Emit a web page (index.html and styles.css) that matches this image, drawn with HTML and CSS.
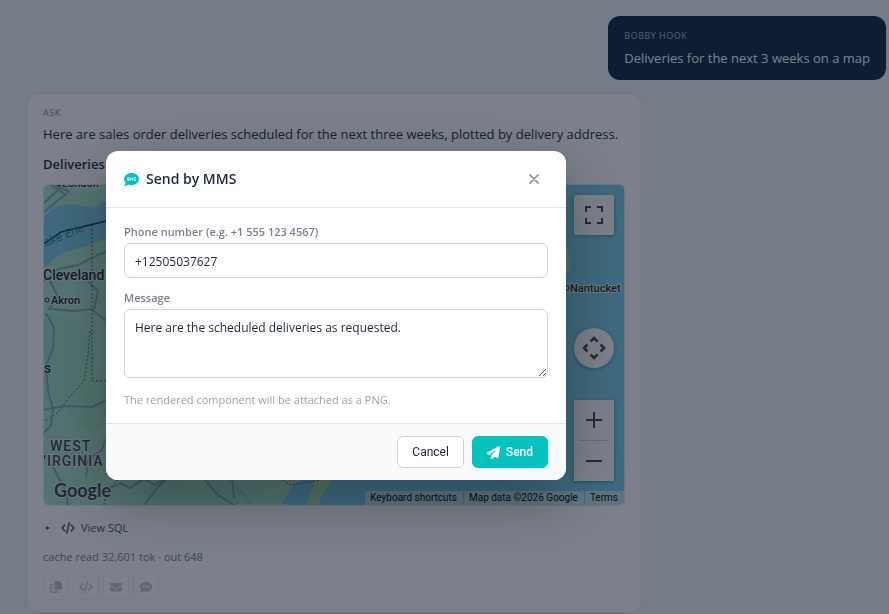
FILE: index.html
```html
<!DOCTYPE html>
<html lang="en">
<head>
    <meta charset="UTF-8" />
    <title>Ask - Deliveries</title>
    <link rel="stylesheet" href="styles.css">
</head>
<body>
    <!-- Icons shared by the page and the dialog -->
    <svg class="sprite" aria-hidden="true">
        <symbol id="icon-sms" viewBox="0 0 512 512">
            <path fill="currentColor" d="M256 32C114.600 32 0 125.100 0 240c0 49.600 21.400 95 57 130.700C44.500 421.100 2.700 466 2.200 466.500c-2.200 2.300-2.800 5.700-1.500 8.700S4.800 480 8 480c66.300 0 116-31.800 140.600-51.400 32.700 12.300 69 19.400 107.400 19.400 141.400 0 256-93.100 256-208S397.400 32 256 32z"/>
            <path fill="none" stroke="var(--knockout)" stroke-width="34" d="M170 194h-38q-18 0-18 20 0 16 18 22l20 8q18 6 18 22 0 20-18 20h-40M208 300V200l46 58 46-58v100M402 194h-38q-18 0-18 20 0 16 18 22l20 8q18 6 18 22 0 20-18 20h-40"/>
        </symbol>
        <symbol id="icon-code" viewBox="0 0 16 14">
            <path fill="none" stroke="currentColor" stroke-width="1.700" stroke-linecap="round" stroke-linejoin="round" d="M4.300 3.500 1 7l3.300 3.500M11.700 3.500 15 7l-3.300 3.500M9.500 1 6.500 13"/>
        </symbol>
    </svg>

    <main class="chat">
        <section class="bubble bubble-user">
            <div class="who">Bobby Hook</div>
            <p>Deliveries for the next 3 weeks on a map</p>
        </section>

        <section class="bubble bubble-ask">
            <div class="who">Ask</div>
            <p>Here are sales order deliveries scheduled for the next three weeks, plotted by delivery address.</p>
            <h3>Deliveries – next three weeks</h3>

            <div class="map">
                <svg class="map-canvas" viewBox="0 0 580 320" preserveAspectRatio="xMaxYMid slice" role="img" aria-label="Delivery map">
                    <rect width="580" height="320" fill="#aae5ca"/>
                    <g fill="#92d9b3" opacity=".35">
                        <path d="M0 134Q14 122 22 134T40 150T50 176T62 190V240Q40 250 30 236T0 216z"/>
                        <path d="M122 290Q150 304 172 296T214 320H104Q96 304 122 290zM200 294l24 6-12 16-16-8z"/>
                        <path d="M8 176 24 158 40 174 30 180z"/>
                    </g>
                    <!-- water -->
                    <path fill="#7bcde4" d="M0 32 10 22 28 19 50 23 62 16 80 4V48L62 54 40 62 18 68 0 82z"/>
                    <path fill="#7bcde4" d="M240 290 238 320H580V0H330z"/>
                    <path fill="#aae5ca" d="M236 290H262L246 304 238 320H230z"/>
                    <path fill="#b5e3ae" d="M272 290H292L280 306 274 320H262L270 302zM512 48l8 8 6 16-1 14h-9l-4-14z"/>
                    <path fill="none" stroke="#7bcde4" stroke-width="2" d="M178 290 190 300 202 312 206 320"/>
                    <!-- roads -->
                    <g fill="none" stroke="#82a9b9" stroke-width="2">
                        <path d="M0 27 23 8M0 18 17 2M7 0 22 10M11 0 26 7"/>
                        <path d="M0 96 14 84 34 80 54 70 68 65M4 92 14 112 5 124 30 126 47 124 68 140M42 94 54 106 50 124"/>
                        <path d="M2 128 10 142 9 164 2 180 4 206 9 224 7 240 0 248M0 225 20 221 48 222 66 214"/>
                        <path d="M64 250 57 266 44 274 42 292M0 268 10 284 22 306 24 320M62 306 76 298 86 303 100 294 111 300 128 290 160 294 174 310 190 320M100 320 114 302 124 292M188 290 190 314"/>
                    </g>
                    <!-- borders -->
                    <path fill="none" stroke="#203040" stroke-width="1.500" d="M0 59 17 47 62 36"/>
                    <path fill="none" stroke="#44645f" stroke-width="1" stroke-dasharray="2 2" d="M48 40V196H64M46 146 44 170 40 196 24 214 14 228 0 236M60 320 62 308 76 292M232 290 246 300 272 296 292 290"/>

                    <text class="lake" transform="translate(-4 64) rotate(-22)">Lake Erie</text>
                    <g class="place">
                        <text x="18" y="2" class="town">London</text>
                        <text x="-1" y="95" class="city">Cleveland</text>
                        <text x="7" y="119" class="town">Akron</text>
                        <text x="0" y="188" class="city">s</text>
                        <text x="192" y="328" class="town">Richmond</text>
                        <text x="526" y="107" class="town">Nantucket</text>
                    </g>
                    <g fill="#d8f0e4" stroke="#20242c">
                        <circle cx="15" cy="-1" r="2"/>
                        <circle cx="3" cy="115" r="2"/>
                        <circle cx="523" cy="103" r="2"/>
                    </g>
                    <g class="state">
                        <text x="6" y="266">WEST</text>
                        <text x="-7" y="281">VIRGINIA</text>
                    </g>
                    <text class="google" x="10" y="312">Google</text>
                </svg>

                <div class="map-controls">
                    <button class="map-btn" aria-label="Toggle fullscreen">
                        <svg width="20" height="20" viewBox="0 0 20 20"><path fill="none" stroke="#444" stroke-width="2" d="M2 7V2h5M13 2h5v5M18 13v5h-5M7 18H2v-5"/></svg>
                    </button>
                    <button class="map-btn map-pan" aria-label="Map camera controls">
                        <svg width="24" height="24" viewBox="0 0 24 24"><path fill="none" stroke="#444" stroke-width="2.500" d="M8.500 5.500l3.500-3.500 3.500 3.500M8.500 18.500l3.500 3.500 3.500-3.500M5.500 8.500l-3.500 3.500 3.500 3.500M18.500 8.500l3.500 3.500-3.500 3.500"/></svg>
                    </button>
                    <div class="map-zoom">
                        <button class="map-btn" aria-label="Zoom in">
                            <svg width="18" height="18" viewBox="0 0 18 18"><path stroke="#444" stroke-width="2" d="M1 9h16M9 1v16"/></svg>
                        </button>
                        <button class="map-btn" aria-label="Zoom out">
                            <svg width="18" height="18" viewBox="0 0 18 18"><path stroke="#444" stroke-width="2" d="M1 9h16"/></svg>
                        </button>
                    </div>
                </div>

                <div class="map-legal">
                    <button>Keyboard shortcuts</button>
                    <span>Map data ©2026 Google</span>
                    <a href="#">Terms</a>
                </div>
            </div>

            <details class="sql">
                <summary>
                    <svg class="marker" width="4" height="6" viewBox="0 0 4 6"><path fill="currentColor" d="M0 1l4 2-4 2z"/></svg>
                    <svg width="14" height="12"><use href="#icon-code"/></svg>
                    View SQL
                </summary>
            </details>

            <div class="usage">cache read 32,601 tok · out 648</div>

            <div class="actions">
                <button aria-label="Copy">
                    <svg width="12" height="12" viewBox="0 0 12 12"><path fill="currentColor" d="M5.500 0H9l3 3v4.500q0 1-1 1H5.500q-1 0-1-1V1q0-1 1-1z"/><path fill="none" stroke="currentColor" stroke-width="1.300" d="M3.200 3.600H1.500q-.8 0-.8.8v6.100q0 .8.8.8h5q.8 0 .8-.8V9.800"/></svg>
                </button>
                <button aria-label="Copy SQL"><svg width="14" height="12"><use href="#icon-code"/></svg></button>
                <button aria-label="Send by email">
                    <svg width="12" height="12" viewBox="0 0 12 12"><path fill="currentColor" d="M1.200 2h9.600Q12 2 12 3 12 3.500 11.500 3.900L6.600 7.400q-.6.400-1.200 0L.5 3.900Q0 3.500 0 3q0-1 1.200-1zM0 4.700l5 3.600q1 .6 2 0l5-3.600V9q0 1.400-1.400 1.400H1.400Q0 10.400 0 9z"/></svg>
                </button>
                <button aria-label="Send by MMS"><svg width="12" height="12"><use href="#icon-sms"/></svg></button>
            </div>
        </section>
    </main>

    <div class="overlay">
        <form class="modal" role="dialog" aria-labelledby="mms-title">
            <div class="modal-header">
                <svg width="15" height="15"><use href="#icon-sms"/></svg>
                <h2 id="mms-title">Send by MMS</h2>
                <button type="button" class="close" aria-label="Close">
                    <svg width="10" height="10" viewBox="0 0 10 10"><path stroke="currentColor" stroke-width="2" stroke-linecap="round" d="M1 1l8 8M9 1L1 9"/></svg>
                </button>
            </div>
            <div class="modal-body">
                <label for="phone">Phone number (e.g. +1 555 123 4567)</label>
                <input type="tel" id="phone" value="+12505037627">
                <label for="message">Message</label>
                <textarea id="message">Here are the scheduled deliveries as requested.</textarea>
                <p class="hint">The rendered component will be attached as a PNG.</p>
            </div>
            <div class="modal-footer">
                <button type="button" class="btn">Cancel</button>
                <button type="button" class="btn btn-primary">
                    <svg width="13" height="13" viewBox="0 0 512 512"><path fill="currentColor" d="M498.100 5.600c10.100 7 15.400 19.100 13.500 31.200l-64 416c-1.500 9.700-7.400 18.200-16 23s-18.900 5.400-28 1.600L284 427.700l-68.500 74.100c-8.900 9.700-22.900 12.900-35.200 8.100S160 493.200 160 480v-83.600c0-4 1.500-7.800 4.200-10.800L331.800 202.800c5.800-6.300 5.600-16-.4-22s-15.700-6.400-22-.7L106 360.800 17.700 316.600C7.100 311.300.3 300.700 0 288.900s5.900-22.800 16.100-28.700l448-256c10.700-6.100 23.900-5.500 34 1.400z"/></svg>
                    Send
                </button>
            </div>
        </form>
    </div>
</body>
</html>
```
FILE: styles.css
```css
* {
    box-sizing: border-box;
}
body {
    font-family: "Open Sans", "Noto Sans", sans-serif;
    background-color: #f4f6f9;
    color: #1f2937;
    margin: 0;
    min-height: 100vh;
}
button, input, textarea {
    font-family: inherit;
    margin: 0;
}
h2, h3, p {
    margin: 0;
}
.sprite {
    display: none;
}

/* Chat */
.chat {
    display: flex;
    flex-direction: column;
    gap: 13px;
    padding: 16px 3px 2px 26px;
}
.bubble {
    border-radius: 12px;
    padding: 12px 16px;
    font-size: 13px;
    line-height: 20px;
}
.who {
    font-size: 9px;
    line-height: 14px;
    letter-spacing: 0.5px;
    text-transform: uppercase;
}
.bubble-user {
    align-self: flex-end;
    padding: 13px 16px 12px;
    background-color: #0a2540;
    color: #fff;
}
.bubble-user p {
    margin-top: 5px;
}
.bubble-user .who {
    color: #b0b8c4;
}
.bubble-ask {
    width: 100%;
    max-width: 616px;
    background-color: #fff;
    border: 1px solid #e2e6ee;
}
.bubble-ask .who {
    color: #848b98;
}
.bubble-ask p {
    margin-top: 4px;
    white-space: nowrap;
}
.bubble-ask h3 {
    margin-top: 10px;
    font-size: 13px;
    font-weight: 600;
}

/* Map */
.map {
    position: relative;
    height: 322px;
    margin-top: 10px;
    border: 1px solid #e2e6ee;
    border-radius: 6px;
    overflow: hidden;
    font-family: Roboto, sans-serif;
}
.map-canvas {
    display: block;
    width: 100%;
    height: 100%;
}
.map-canvas text {
    paint-order: stroke;
    stroke: #d8f0e4;
    stroke-width: 2px;
    fill: #20242c;
}
.map-canvas .town {
    font-size: 11px;
    font-weight: 500;
}
.map-canvas .city {
    font-size: 14px;
    font-weight: 500;
}
.map-canvas .state text {
    font-size: 14px;
    font-weight: 500;
    letter-spacing: 1px;
    fill: #3c4450;
}
.map-canvas .lake {
    font-size: 12px;
    fill: #2f8fa8;
    stroke: none;
}
.map-canvas .google {
    font-family: Lato, sans-serif;
    font-size: 18px;
    font-weight: 700;
    fill: #3c4048;
}
.map-controls {
    position: absolute;
    top: 10px;
    right: 10px;
}
.map-btn {
    display: flex;
    align-items: center;
    justify-content: center;
    width: 40px;
    height: 40px;
    padding: 0;
    background-color: #fff;
    border: none;
    border-radius: 2px;
    box-shadow: 0 1px 4px rgba(0,0,0,0.3);
}
.map-pan {
    margin: 93px 0 32px;
    border-radius: 50%;
}
.map-zoom {
    background-color: #fff;
    box-shadow: 0 1px 4px rgba(0,0,0,0.3);
}
.map-zoom .map-btn {
    box-shadow: none;
}
.map-zoom .map-btn + .map-btn {
    width: 30px;
    height: 41px;
    margin: 0 auto;
    border-top: 1px solid #d8d8d8;
    border-radius: 0;
}
.map-legal {
    position: absolute;
    right: 0;
    bottom: 0;
    display: flex;
    gap: 1px;
    font-size: 10px;
    line-height: 14px;
}
.map-legal > * {
    padding: 0 6px 0 5px;
    border: none;
    background-color: rgba(245,245,245,0.6);
    color: #000;
    font: inherit;
    text-decoration: none;
}

/* Under the map */
.sql {
    margin-top: 12px;
    font-size: 11px;
    color: #4b5563;
}
.sql summary {
    display: flex;
    align-items: center;
    gap: 6px;
    list-style: none;
}
.sql .marker {
    margin: 0 5px 0 3px;
}
.usage {
    margin-top: 10px;
    font-size: 11px;
    line-height: 18px;
    color: #7c8490;
}
.actions {
    display: flex;
    gap: 4px;
    margin-top: 8px;
}
.actions button {
    --knockout: #fff;
    display: flex;
    align-items: center;
    justify-content: center;
    width: 26px;
    height: 26px;
    padding: 0;
    background: none;
    border: 1px solid #e5e7eb;
    border-radius: 4px;
    color: #6b7280;
    opacity: 0.4;
}

/* Dialog */
.overlay {
    position: fixed;
    inset: 0;
    display: flex;
    align-items: flex-start;
    padding: 151px 16px 16px 106px;
    background-color: rgba(15,23,42,0.55);
}
.modal {
    width: 100%;
    max-width: 460px;
    background-color: #fff;
    border-radius: 12px;
    box-shadow: 0 20px 60px rgba(0,0,0,0.3);
    overflow: hidden;
}
.modal-header {
    --knockout: #fff;
    display: flex;
    align-items: center;
    gap: 7px;
    height: 57px;
    padding: 0 18px;
    border-bottom: 1px solid #e5e7eb;
    color: #06c2bc;
}
.modal-header h2 {
    flex: 1;
    font-size: 14px;
    line-height: 20px;
    font-weight: 600;
    color: #1f2937;
}
.close {
    display: flex;
    align-items: center;
    justify-content: center;
    width: 28px;
    height: 28px;
    padding: 0;
    background: none;
    border: none;
    color: #9ca3af;
}
.modal-body {
    display: flex;
    flex-direction: column;
    padding: 16px 18px 15px;
}
.modal-body label {
    margin-bottom: 3px;
    font-size: 11px;
    line-height: 16px;
    font-weight: 600;
    color: #7b828e;
}
.modal-body input,
.modal-body textarea {
    width: 100%;
    padding: 9px 10px;
    border: 1px solid #d1d5db;
    border-radius: 6px;
    background-color: #fff;
    font-size: 12px;
    line-height: 18px;
    color: #1f2937;
}
.modal-body input {
    height: 35px;
    margin-bottom: 12px;
    padding: 9px 10px 7px;
}
.modal-body textarea {
    height: 69px;
    resize: vertical;
}
.hint {
    margin-top: 14px;
    font-size: 11px;
    line-height: 16px;
    color: #9ca3af;
}
.modal-footer {
    display: flex;
    justify-content: flex-end;
    gap: 8px;
    padding: 12px 18px;
    background-color: #f9fafb;
    border-top: 1px solid #e5e7eb;
}
.btn {
    display: flex;
    align-items: center;
    gap: 6px;
    height: 32px;
    padding: 0 14px;
    background-color: #fff;
    border: 1px solid #d1d5db;
    border-radius: 6px;
    font-family: Roboto, sans-serif;
    font-size: 12px;
    color: #1f2937;
}
.btn-primary {
    background-color: #06c2bc;
    border-color: #06c2bc;
    font-weight: 500;
    color: #fff;
}
```
